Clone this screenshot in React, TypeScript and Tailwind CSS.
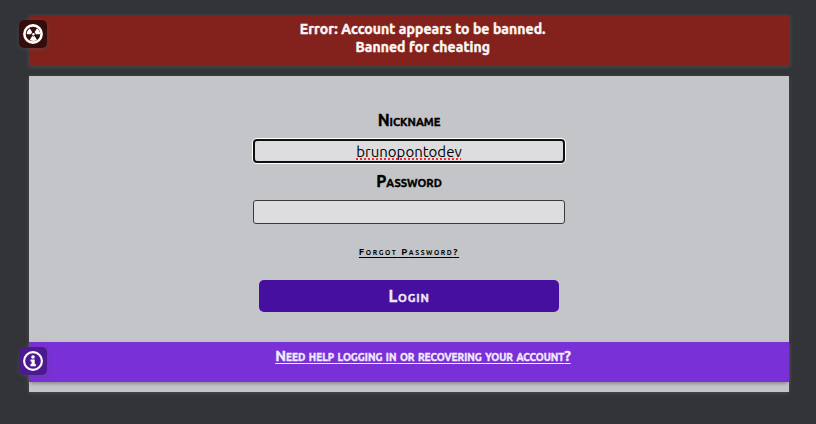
import { FaRadiation } from "react-icons/fa";

function RadiationIcon() {
  return (
    <svg viewBox="0 0 20 20" className="size-5">
      <circle cx="10" cy="10" r="8.6" fill="none" stroke="#fff" strokeWidth="2.6" />
      <FaRadiation x="3.4" y="3.2" width="13.2" height="13.2" color="#fff" />
    </svg>
  );
}

function InfoIcon() {
  return (
    <svg viewBox="0 0 20 20" className="size-5" fill="#fff">
      <circle cx="10" cy="10" r="8.9" fill="none" stroke="#fff" strokeWidth="2.1" />
      <circle cx="10" cy="6" r="1.8" />
      <path d="M7.5 8.4h4.2v4.7h1.1v2.1H7.5v-2.1h1.1v-2.6H7.5z" />
    </svg>
  );
}

/** Sets lowercase runs as capitals at 70% of the surrounding size. */
function SmallCaps({ text }: { text: string }) {
  return (
    <>
      {text.split(/([a-z]+(?: [a-z]+)*)/).map((run, i) =>
        i % 2 ? (
          <span key={i} className="text-[0.7em] uppercase">
            {run.split(" ").map((word, j) => (
              <span key={j}>
                {j > 0 && <span className="text-[1.4286em]"> </span>}
                {word}
              </span>
            ))}
          </span>
        ) : (
          run
        ),
      )}
    </>
  );
}

export default function App() {
  return (
    <main className="h-[424px] w-[816px] overflow-hidden bg-[#333438] px-[29px] pt-[15px] font-['Ubuntu','Noto_Sans',sans-serif] text-black">
      <section className="relative h-[51px] w-[760.5px] bg-[#83221c] pt-[5px] pl-[27px] text-center text-[14px] leading-[18px] font-bold tracking-[0.07px] text-[#fbf6f6] shadow-[0_1px_4px_#4b4c4e] [-webkit-text-stroke:0.45px_currentColor]">
        <span className="absolute top-[5px] left-[-10px] flex size-7 items-center justify-center rounded-[5px] bg-[#350e0c] shadow-[0_1px_4px_#55555588]">
          <RadiationIcon />
        </span>
        <p>Error: Account appears to be banned.</p>
        <p>Banned for cheating</p>
      </section>

      <section className="mt-[10px] flex h-[316px] w-[760px] flex-col items-center bg-[#c4c5c9] pt-[34px] shadow-[0_1px_4px_#4b4c4e]">
        <label htmlFor="nickname" className="h-[29px] text-[16px] leading-5 font-bold [-webkit-text-stroke:0.4px_currentColor]">
          <SmallCaps text="Nickname" />
        </label>
        <div id="nickname" className="flex h-6 w-[312px] justify-center rounded-[4px] border-2 border-[#101010] bg-[#dddddf] text-[15px] leading-[21px] shadow-[0_0_0_1px_#fff]">
          <span className="h-[17px] underline decoration-[#f03035] decoration-dotted decoration-2 underline-offset-1 [text-decoration-skip-ink:none]">brunopontodev</span>
        </div>
        <label htmlFor="password" className="mt-2 h-[29px] text-[16px] leading-5 font-bold [-webkit-text-stroke:0.4px_currentColor]">
          <SmallCaps text="Password" />
        </label>
        <input id="password" type="password" className="h-6 w-[312px] shrink-0 rounded-[3px] border border-[#3a3a3d] bg-[#dddddf]" />
        <a className="mt-5 h-[16px] text-[9.6px] leading-4 font-bold tracking-[1.6px] underline underline-offset-2">
          <SmallCaps text="Forgot Password?" />
        </a>
        <button className="mt-5 h-8 w-[300px] shrink-0 rounded-[5px] bg-[#470fa0] text-[16px] font-bold tracking-[0.8px] text-[#eee8f5] [-webkit-text-stroke:0.4px_currentColor]">
          <SmallCaps text="Login" />
        </button>
        <div className="relative mt-[30px] h-10 w-full shrink-0 bg-[#7930d7] pt-[5px] pl-[28px] text-center shadow-[0_2px_4px_-1px_#777]">
          <span className="absolute top-[5px] left-[-10px] flex size-7 items-center justify-center rounded-[5px] bg-[#4c1990] shadow-[0_1px_4px_#55555588]">
            <InfoIcon />
          </span>
          <a className="block text-[14.45px] leading-[18px] font-bold text-[#f2ebfb] underline underline-offset-2 [-webkit-text-stroke:0.4px_currentColor]">
            <SmallCaps text="Need help logging in or recovering your account?" />
          </a>
        </div>
      </section>
    </main>
  );
}
